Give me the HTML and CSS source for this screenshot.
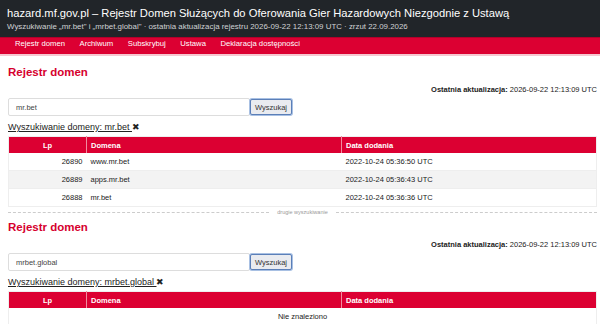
FILE: index.html
```html
<!DOCTYPE html>
<html lang="pl">
<head>
    <meta charset="UTF-8">
    <meta name="viewport" content="width=device-width, initial-scale=1.0">
    <title>hazard.mf.gov.pl – Rejestr Domen</title>
    <link rel="stylesheet" href="styles.css">
</head>
<body>
    <header class="top">
        <div class="site-title">hazard.mf.gov.pl – Rejestr Domen Służących do Oferowania Gier Hazardowych Niezgodnie z Ustawą</div>
        <div class="site-sub">Wyszukiwanie „mr.bet" i „mrbet.global" · ostatnia aktualizacja rejestru 2026-09-22 12:13:09 UTC · zrzut 22.09.2026</div>
    </header>
    <nav class="menu">
        <a href="#">Rejestr domen</a>
        <a href="#">Archiwum</a>
        <a href="#">Subskrybuj</a>
        <a href="#">Ustawa</a>
        <a href="#">Deklaracja dostępności</a>
    </nav>

    <div class="container">
        <section class="search first">
            <h1>Rejestr domen</h1>
            <p class="updated"><b>Ostatnia aktualizacja:</b> 2026-09-22 12:13:09 UTC</p>
            <form class="search-form">
                <input type="text" value="mr.bet">
                <button type="button">Wyszukaj</button>
            </form>
            <p class="query"><a href="#">Wyszukiwanie domeny: mr.bet </a><span class="clear">✖</span></p>
            <table>
                <thead>
                    <tr><th class="lp">Lp</th><th class="dom">Domena</th><th>Data dodania</th></tr>
                </thead>
                <tbody>
                    <tr><td class="num">26890</td><td>www.mr.bet</td><td>2022-10-24 05:36:50 UTC</td></tr>
                    <tr><td class="num">26889</td><td>apps.mr.bet</td><td>2022-10-24 05:36:43 UTC</td></tr>
                    <tr><td class="num">26888</td><td>mr.bet</td><td>2022-10-24 05:36:36 UTC</td></tr>
                </tbody>
            </table>
        </section>

        <div class="divider"><span>drugie wyszukiwanie</span></div>

        <section class="search">
            <h1>Rejestr domen</h1>
            <p class="updated"><b>Ostatnia aktualizacja:</b> 2026-09-22 12:13:09 UTC</p>
            <form class="search-form">
                <input type="text" value="mrbet.global">
                <button type="button">Wyszukaj</button>
            </form>
            <p class="query"><a href="#">Wyszukiwanie domeny: mrbet.global </a><span class="clear">✖</span></p>
            <table>
                <thead>
                    <tr><th class="lp">Lp</th><th class="dom">Domena</th><th>Data dodania</th></tr>
                </thead>
                <tbody>
                    <tr><td colspan="3" class="empty">Nie znaleziono</td></tr>
                </tbody>
            </table>
        </section>
    </div>
</body>
</html>
```

FILE: styles.css
```css
body {
    margin: 0;
    font-family: "Liberation Sans", Arial, sans-serif;
    color: #222;
    background-color: #fff;
}

.top {
    background-color: #212529;
    color: #fff;
    padding: 5px 7px 0;
    height: 37px;
    box-sizing: border-box;
}

.site-title {
    font-size: 11.2px;
    line-height: 16px;
}

.site-sub {
    font-size: 7.9px;
    line-height: 12px;
    color: #d0d2d5;
}

.menu {
    background-color: #dc0032;
    border-top: 1px solid #b3002a;
    border-bottom: 2px solid #f6c7d0;
    height: 16px;
    box-sizing: content-box;
    padding-left: 15px;
    display: flex;
    gap: 14.5px;
}

.menu a {
    color: #fff;
    text-decoration: none;
    font-size: 7.7px;
    line-height: 10px;
    padding-top: 1px;
}

.container {
    padding: 0 3px 0 8px;
}

.search.first {
    padding-top: 4px;
}

h1 {
    color: #d6002e;
    font-size: 11.5px;
    margin: 5px 0 0;
    line-height: 14px;
}

.updated {
    text-align: right;
    font-size: 7.5px;
    margin: 5px 0 0;
    line-height: 11px;
}

.search-form {
    display: flex;
    align-items: center;
    margin-top: 3px;
    height: 18px;
}

.search-form input {
    width: 242px;
    height: 18px;
    box-sizing: border-box;
    border: 1px solid #ddd;
    border-radius: 2px;
    padding: 0 7px;
    font-family: inherit;
    font-size: 7.5px;
    color: #444;
}

.search-form button {
    height: 16px;
    padding: 0 4px;
    font-family: inherit;
    font-size: 7.5px;
    background-color: #e9ebf0;
    border: 1px solid #5b7fb8;
    border-radius: 2px;
    box-shadow: 0 0 0 1px #a8c0e3;
    color: #333;
}

.query {
    margin: 5px 0 0;
    font-size: 9px;
    line-height: 12px;
}

.query a {
    color: #222;
}

.clear {
    font-size: 9px;
}

table {
    width: 100%;
    border-collapse: collapse;
    margin-top: 3px;
    font-size: 7.5px;
    border: 1px solid #eee;
}

th {
    background-color: #dc0032;
    color: #fff;
    text-align: left;
    height: 16px;
    padding: 0 4px;
}

th.lp {
    width: 69px;
    text-align: center;
    border-right: 1px solid #f08ca0;
}

th.dom {
    width: 246px;
    border-right: 1px solid #f08ca0;
}

td {
    height: 17px;
    padding: 0 4px;
    border-bottom: 1px solid #eee;
}

td.num {
    text-align: right;
}

tbody tr:nth-child(even) td {
    background-color: #f3f3f3;
}

td.empty {
    text-align: center;
}

.divider {
    display: flex;
    align-items: center;
    gap: 8px;
    margin-top: 2px;
    height: 6px;
    color: #999;
    font-size: 5.5px;
}

.divider::before,
.divider::after {
    content: "";
    flex: 1;
    border-top: 1px dashed #ccc;
}
```
